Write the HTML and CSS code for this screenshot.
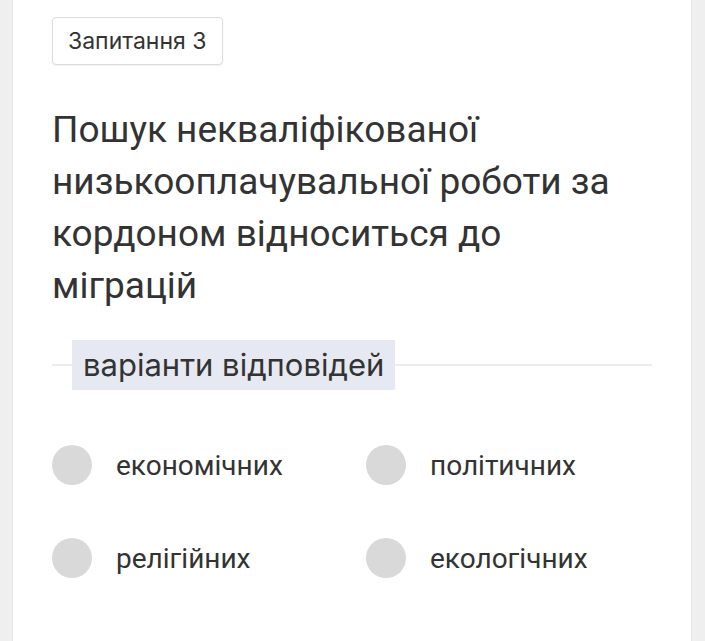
FILE: index.html
```html
<!DOCTYPE html>
<html lang="uk">
<head>
<meta charset="utf-8">
<link rel="stylesheet" href="styles.css">
</head>
<body>
<div class="card">
  <div class="badge">Запитання 3</div>
  <h1 class="question">Пошук некваліфікованої низькооплачувальної роботи за кордоном відноситься до міграцій</h1>
  <div class="divider"><span class="divider-label">варіанти відповідей</span></div>
  <div class="options">
    <div class="option"><span class="radio"></span><span class="opt-text">економічних</span></div>
    <div class="option"><span class="radio"></span><span class="opt-text">політичних</span></div>
    <div class="option"><span class="radio"></span><span class="opt-text">релігійних</span></div>
    <div class="option"><span class="radio"></span><span class="opt-text">екологічних</span></div>
  </div>
</div>
</body>
</html>
```
FILE: styles.css
```css
html, body {
  margin: 0;
  padding: 0;
  background: #efefef;
  height: 100%;
}
.card {
  margin-left: 12px;
  width: 680px;
  min-height: 641px;
  box-sizing: border-box;
  background: #fff;
  border-left: 1px solid #e6e6e6;
  border-right: 1px solid #e6e6e6;
  padding: 17px 0 0 39px;
  color: #333;
}
.badge {
  display: inline-block;
  box-sizing: border-box;
  height: 48px;
  line-height: 46px;
  padding: 0 15px;
  border: 1px solid #dcdcdc;
  border-radius: 4px;
  box-shadow: 0 1px 2px rgba(0,0,0,0.06);
  font-family: Inter, "Noto Sans", sans-serif;
  font-size: 23px;
  color: #333;
}
.question {
  margin: 39px 0 0 0;
  font-family: Roboto, sans-serif;
  font-weight: 400;
  font-size: 37px;
  line-height: 52px;
  color: #333;
  width: 595px;
}
.divider {
  margin-top: 28px;
  width: 600px;
  display: flex;
  align-items: center;
  position: relative;
  height: 50px;
}
.divider::before {
  content: "";
  position: absolute;
  left: 0;
  right: 0;
  top: 24px;
  height: 2px;
  background: #eceeee;
}
.divider-label {
  position: relative;
  margin-left: 20px;
  background: #e6e9f2;
  height: 50px;
  line-height: 50px;
  padding: 0 11px;
  font-family: Inter, "Noto Sans", sans-serif;
  font-size: 31px;
  color: #333;
}
.options {
  margin-top: 55px;
  display: grid;
  grid-template-columns: 314px 300px;
  row-gap: 53px;
}
.option {
  display: flex;
  align-items: center;
  height: 40px;
}
.radio {
  width: 40px;
  height: 40px;
  border-radius: 50%;
  background: #d9d9d9;
  flex: none;
}
.opt-text {
  margin-left: 24px;
  font-family: Roboto, sans-serif;
  font-size: 28px;
  color: #333;
}
```
